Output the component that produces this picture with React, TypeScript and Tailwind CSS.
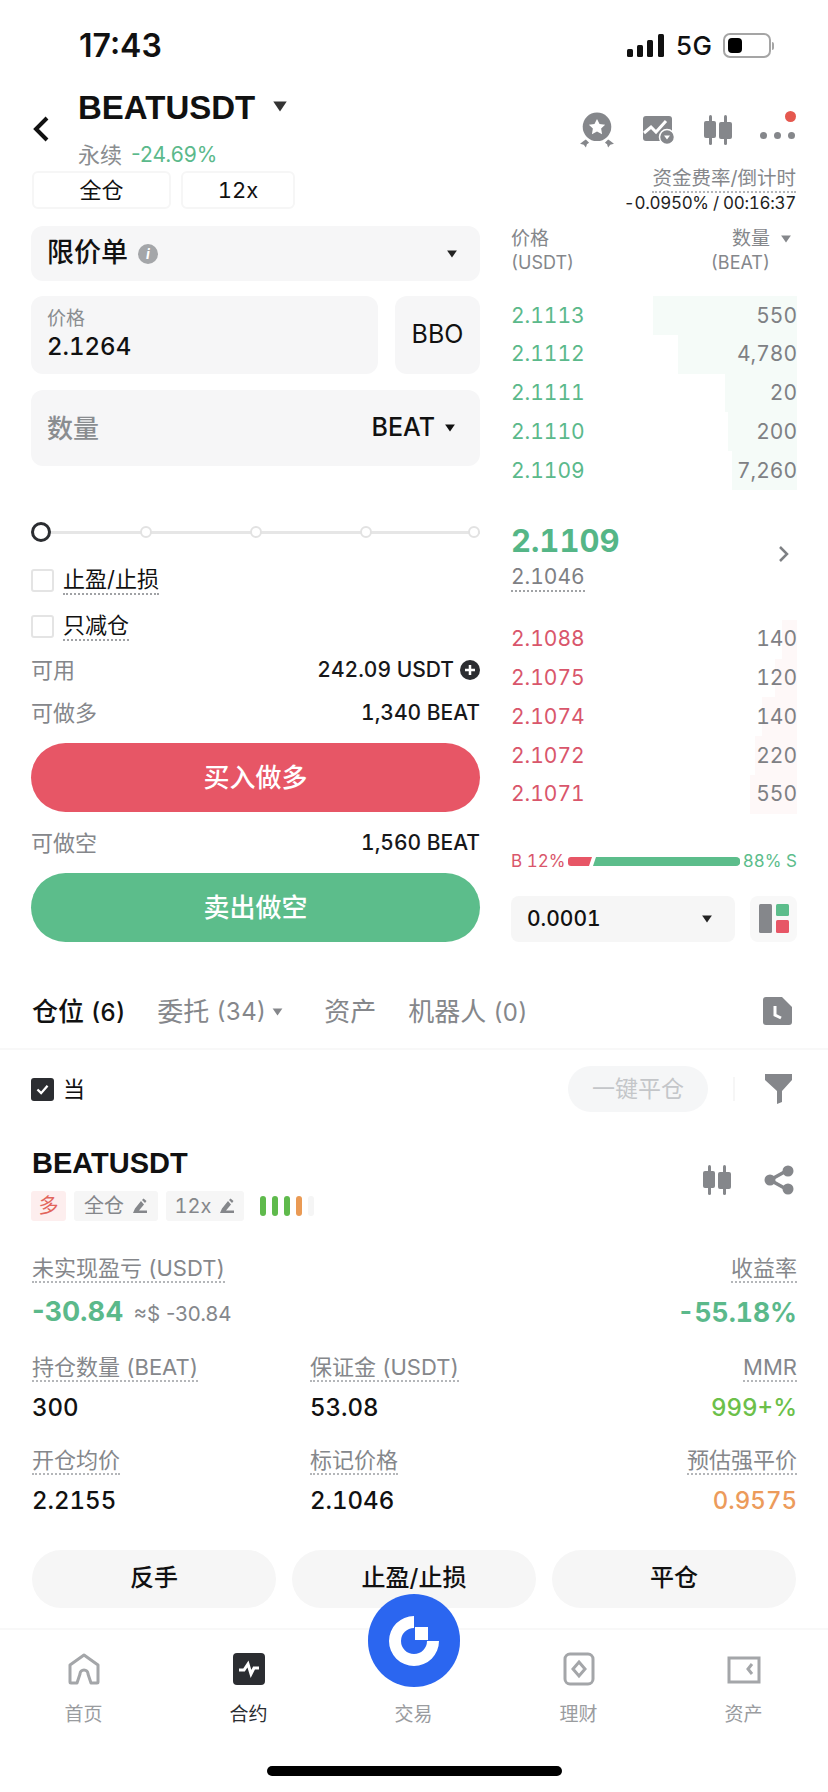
const green = "text-[#5bb98b]";

function Caret({ className = "" }: { className?: string }) {
  return (
    <svg viewBox="0 0 12 9" className={className} fill="currentColor">
      <path d="M0.5 0.5h11L6 8.5z" />
    </svg>
  );
}

function Candles({ className = "" }: { className?: string }) {
  return (
    <svg viewBox="0 0 30 30" className={className} fill="#85878b">
      <rect x="6" y="0" width="3" height="30" rx="1.5" />
      <rect x="1" y="6" width="12" height="17" rx="2" />
      <rect x="21" y="0" width="3" height="30" rx="1.5" />
      <rect x="16" y="7" width="13" height="17" rx="2" />
    </svg>
  );
}

function Medal() {
  return (
    <svg viewBox="0 0 34 34" className="h-[36px] w-[36px]">
      <circle cx="17" cy="14" r="13.5" fill="#85878b" />
      <path d="M17 6.5l2.4 4.8 5.3.7-3.8 3.7.9 5.2-4.8-2.4-4.8 2.4.9-5.2-3.8-3.700 5.3-.7z" fill="#fff" />
      <path d="M1 30l4-3 1.5-1 3 3-2 1.5-1 3-2-2.500zM33 30l-4-3-1.500-1-3 3 2 1.500 1 3 2-2.500z" fill="#85878b" />
    </svg>
  );
}

function ChartBadge() {
  return (
    <svg viewBox="0 0 34 30" className="h-[30px] w-[34px]">
      <rect x="1" y="1" width="29" height="25" rx="3" fill="#85878b" />
      <path d="M2 18l7-6 5 5 10-11" stroke="#fff" strokeWidth="3" fill="none" />
      <circle cx="25" cy="22" r="7.500" fill="#85878b" stroke="#fff" strokeWidth="1.500" />
      <path d="M22 20.500h6l-3 4z" fill="#fff" />
    </svg>
  );
}

function Share() {
  return (
    <svg viewBox="0 0 30 30" className="h-[30px] w-[30px]" fill="#85878b">
      <path d="M24 5L6 15l18 10" stroke="#85878b" strokeWidth="3.500" fill="none" />
      <circle cx="24" cy="6" r="5.500" />
      <circle cx="6" cy="15" r="5.500" />
      <circle cx="24" cy="24" r="5.500" />
    </svg>
  );
}

function Pencil() {
  return (
    <svg viewBox="0 0 16 16" className="h-4 w-4" fill="#85878b">
      <path d="M1 15h14v-2.500H7l5-6L9 3 3 10.500z" />
      <path d="M10 2l1.500-1.500 3 2.500L13 5z" />
    </svg>
  );
}

function Label({ children, className = "" }: { children: React.ReactNode; className?: string }) {
  return (
    <span className={`inline-block border-b-2 border-dotted border-[#b4b6b9] leading-[26px] text-[#85878b] ${className}`}>
      {children}
    </span>
  );
}

function BookRow({ price, qty, from, color, bar }: { price: string; qty: string; from: number; color: string; bar: string }) {
  return (
    <div className="relative flex h-[38.75px] items-center justify-between text-[21px]">
      <div className={`absolute inset-y-0 right-0 ${bar}`} style={{ left: from }} />
      <span className={`relative ${color}`}>{price}</span>
      <span className="relative text-[#7e8084]">{qty}</span>
    </div>
  );
}

function Pair({ label, value, plus }: { label: string; value: string; plus?: boolean }) {
  return (
    <div className="flex h-[30px] items-center justify-between">
      <span className="text-[22px] text-[#85878b]">{label}</span>
      <span className="flex items-center gap-[6px] text-[21px] font-medium text-[#17181a]">
        {value}
        {plus && (
          <svg viewBox="0 0 20 20" className="h-5 w-5">
            <circle cx="10" cy="10" r="10" fill="#2b2d31" />
            <path d="M5 10h10M10 5v10" stroke="#fff" strokeWidth="2.500" />
          </svg>
        )}
      </span>
    </div>
  );
}

function Stat({ label, value, valueClass = "text-[#111]", right }: { label: string; value: string; valueClass?: string; right?: boolean }) {
  return (
    <div className={`flex flex-col ${right ? "items-end" : "items-start"}`}>
      <Label className="text-[22px]">{label}</Label>
      <span className={`mt-[11px] text-[24px] leading-[30px] font-medium ${valueClass}`}>{value}</span>
    </div>
  );
}

function Action({ children }: { children: React.ReactNode }) {
  return (
    <div className="flex h-[58px] w-[244px] items-center justify-center rounded-full bg-[#f6f6f6] pb-[2px] text-[24px] font-medium text-[#111]">
      {children}
    </div>
  );
}

function NavItem({ label, active, children }: { label: string; active?: boolean; children?: React.ReactNode }) {
  return (
    <div className="flex w-[165px] flex-col items-center">
      <div className="flex h-[34px] items-center">{children}</div>
      <span className={`mt-[16px] text-[19px] leading-[26px] ${active ? "text-[#2b2d31]" : "text-[#9a9c9f]"}`}>{label}</span>
    </div>
  );
}

export default function App() {
  return (
    <div className="relative h-[1792px] w-[828px] overflow-hidden bg-white font-['Inter','Noto_Sans_CJK_SC',sans-serif] text-[#111] tabular-nums">
      {/* status bar */}
      <div className="flex h-[92px] items-center justify-between pr-[54px] pb-[1px] pl-[79px]">
        <span className="text-[32px] font-semibold normal-nums">17:43</span>
        <div className="flex items-center">
          <svg viewBox="0 0 38 24" className="h-6 w-[38px]" fill="#111">
            <rect x="0" y="15" width="6" height="8" rx="1.500" />
            <rect x="10" y="11" width="6" height="12" rx="1.500" />
            <rect x="20" y="6" width="6" height="17" rx="1.500" />
            <rect x="31" y="0" width="6" height="23" rx="1.500" />
          </svg>
          <span className="ml-[11px] text-[26px] leading-none font-medium">5G</span>
          <div className="ml-[11px] flex h-[25px] w-[48px] items-center rounded-[7px] border-2 border-[#a5a5a5] p-[3px]">
            <div className="h-full w-[14px] rounded-[4px] bg-black" />
          </div>
          <div className="ml-[1px] h-[8px] w-[2px] rounded-r bg-[#a5a5a5]" />
        </div>
      </div>

      {/* header */}
      <div className="flex h-[134px] justify-between pr-[32px] pl-[32px]">
        <div>
          <div className="flex">
            <svg viewBox="0 0 18 26" className="mt-[24px] h-[26px] w-[18px] flex-none" fill="none" stroke="#111" strokeWidth="4">
              <path d="M15 2L4 13l11 11" />
            </svg>
            <div className="ml-[28px]">
              <div className="flex h-[32px] items-center">
                <span className="font-['Liberation_Sans',sans-serif] text-[33px] font-bold">BEATUSDT</span>
                <Caret className="mt-[-4px] ml-[17px] h-[11px] w-[16px] text-[#333]" />
              </div>
              <div className="mt-[16px] flex h-[30px] items-center text-[22px] text-[#8a8d90]">
                永续
                <span className={`ml-[9px] text-[21px] normal-nums ${green}`}>-24.69%</span>
              </div>
            </div>
          </div>
          <div className="mt-[1px] flex gap-[10px] text-[22px]">
            <div className="flex h-[38px] w-[139px] items-center justify-center rounded-[6px] border-2 border-[#f6f6f6]">全仓</div>
            <div className="flex h-[38px] w-[114px] items-center justify-center rounded-[6px] border-2 border-[#f6f6f6]">12x</div>
          </div>
        </div>
        <div className="flex flex-col items-end">
          <div className="mt-[20px] flex h-[36px] items-center gap-[27px]">
            <Medal />
            <ChartBadge />
            <Candles className="h-[30px] w-[30px]" />
            <div className="relative flex h-[30px] w-[36px] items-end gap-[7px] pb-[6px]">
              <span className="h-[7px] w-[7px] rounded-full bg-[#85878b]" />
              <span className="h-[7px] w-[7px] rounded-full bg-[#85878b]" />
              <span className="h-[7px] w-[7px] rounded-full bg-[#85878b]" />
              <span className="absolute top-[-4px] right-0 h-[11px] w-[11px] rounded-full bg-[#e5584f]" />
            </div>
          </div>
          <Label className="mt-[17px] text-[19.5px]">资金费率/倒计时</Label>
          <span className="mt-[-2px] text-[17px] leading-[24px] tracking-[-0.3px] text-[#222]">-0.0950% / 00:16:37</span>
        </div>
      </div>

      {/* trade form + order book */}
      <div className="flex h-[745px] pl-[31px]">
        <div className="w-[449px]">
          <div className="flex h-[55px] items-center rounded-[12px] bg-[#f6f6f7] pr-[22px] pl-[16px]">
            <span className="text-[27px] font-medium">限价单</span>
            <span className="ml-[10px] flex h-5 w-5 items-center justify-center rounded-full bg-[#a4a6a9] text-[14px] font-bold text-white italic">i</span>
            <Caret className="ml-auto h-[8px] w-[12px] text-[#222]" />
          </div>
          <div className="mt-[15px] flex gap-[17px]">
            <div className="h-[78px] w-[347px] rounded-[12px] bg-[#f6f6f7] pt-[10px] pl-[16px]">
              <div className="text-[19px] leading-[26px] text-[#8a8d90]">价格</div>
              <div className="text-[24px] leading-[30px] font-medium">2.1264</div>
            </div>
            <div className="flex h-[78px] w-[85px] items-center justify-center rounded-[12px] bg-[#f6f6f7] text-[25px]">BBO</div>
          </div>
          <div className="mt-[16px] flex h-[76px] items-center justify-between rounded-[12px] bg-[#f6f6f7] pr-[24px] pl-[16px]">
            <span className="text-[26px] font-medium text-[#8a8d90]">数量</span>
            <span className="flex items-center gap-[9px] text-[25px] font-medium">
              BEAT
              <Caret className="h-[8px] w-[12px] text-[#111]" />
            </span>
          </div>

          <div className="relative mt-[56px] flex h-[20px] items-center">
            <div className="absolute inset-x-0 h-[3px] bg-[#e6e6e6]" />
            <span className="relative h-[20px] w-[20px] rounded-full border-[3px] border-[#2b2d31] bg-white" />
            <span className="relative ml-[89px] h-[12px] w-[12px] rounded-full border-2 border-[#e2e2e2] bg-white" />
            <span className="relative ml-[98px] h-[12px] w-[12px] rounded-full border-2 border-[#e2e2e2] bg-white" />
            <span className="relative ml-[98px] h-[12px] w-[12px] rounded-full border-2 border-[#e2e2e2] bg-white" />
            <span className="relative ml-auto h-[12px] w-[12px] rounded-full border-2 border-[#e2e2e2] bg-white" />
          </div>

          <div className="mt-[25px] flex h-[26px] items-center">
            <span className="h-[23px] w-[23px] rounded-[3px] border-2 border-[#e4e4e4]" />
            <span className="ml-[9px] inline-block border-b-2 border-dotted border-[#a0a2a5] text-[22px] leading-[28px]">止盈/止损</span>
          </div>
          <div className="mt-[20px] flex h-[26px] items-center">
            <span className="h-[23px] w-[23px] rounded-[3px] border-2 border-[#e4e4e4]" />
            <span className="ml-[9px] inline-block border-b-2 border-dotted border-[#a0a2a5] text-[22px] leading-[28px]">只减仓</span>
          </div>

          <div className="mt-[16px]">
            <Pair label="可用" value="242.09 USDT" plus />
          </div>
          <div className="mt-[13px]">
            <Pair label="可做多" value="1,340 BEAT" />
          </div>
          <div className="mt-[15px] flex h-[69px] items-center justify-center rounded-full bg-[#e75666] text-[26px] font-medium text-white">
            买入做多
          </div>
          <div className="mt-[16px]">
            <Pair label="可做空" value="1,560 BEAT" />
          </div>
          <div className="mt-[15px] flex h-[69px] items-center justify-center rounded-full bg-[#5cbd8b] text-[26px] font-medium text-white">
            卖出做空
          </div>
        </div>

        <div className="ml-[31px] w-[286px]">
          <div className="flex justify-between text-[#85878b]">
            <div className="pt-[1px] text-[19px] leading-[24px]">
              价格
              <div className="text-[18px]">(USDT)</div>
            </div>
            <div className="flex flex-col items-end pt-[1px] pr-[27px] text-[19px] leading-[24px]">
              <span className="relative">
                数量
                <Caret className="absolute top-[8px] right-[-22px] h-[8px] w-[12px] text-[#85878b]" />
              </span>
              <span className="text-[18px]">(BEAT)</span>
            </div>
          </div>
          <div className="mt-[21px]">
            <BookRow price="2.1113" qty="550" from={142} color={green} bar="bg-[#f5fbf8]" />
            <BookRow price="2.1112" qty="4,780" from={167} color={green} bar="bg-[#f5fbf8]" />
            <BookRow price="2.1111" qty="20" from={214} color={green} bar="bg-[#f5fbf8]" />
            <BookRow price="2.1110" qty="200" from={217} color={green} bar="bg-[#f5fbf8]" />
            <BookRow price="2.1109" qty="7,260" from={221} color={green} bar="bg-[#f5fbf8]" />
          </div>
          <div className="flex h-[130px] items-start justify-between pt-[31px]">
            <div>
              <div className="text-[31px] leading-[40px] font-bold text-[#55b687]">2.1109</div>
              <span className="mt-[3px] inline-block border-b-2 border-dotted border-[#a0a2a5] text-[21px] leading-[26px] text-[#7e8084]">2.1046</span>
            </div>
            <svg viewBox="0 0 12 18" className="mt-[24px] mr-[7px] h-[18px] w-[12px]" fill="none" stroke="#7e8084" strokeWidth="2.500">
              <path d="M2 2l7 7-7 7" />
            </svg>
          </div>
          <div>
            <BookRow price="2.1088" qty="140" from={271} color="text-[#d9566b]" bar="bg-[#fef8f8]" />
            <BookRow price="2.1075" qty="120" from={264} color="text-[#d9566b]" bar="bg-[#fef8f8]" />
            <BookRow price="2.1074" qty="140" from={251} color="text-[#d9566b]" bar="bg-[#fef8f8]" />
            <BookRow price="2.1072" qty="220" from={244} color="text-[#d9566b]" bar="bg-[#fef8f8]" />
            <BookRow price="2.1071" qty="550" from={239} color="text-[#d9566b]" bar="bg-[#fef8f8]" />
          </div>
          <div className="mt-[36px] flex h-[24px] items-center text-[17px] whitespace-nowrap">
            <span className="w-[57px] text-[#d9566b]">B 12%</span>
            <svg viewBox="0 0 24 9" className="h-[9px] w-[24px] flex-none">
              <path d="M3 0h21l-3 9H3a3 3 0 0 1-3-3V3a3 3 0 0 1 3-3z" fill="#e75666" />
            </svg>
            <svg viewBox="0 0 147 9" className="ml-[1px] h-[9px] w-[147px] flex-none">
              <path d="M3 0h140a4 4 0 0 1 0 9H0z" fill="#5cbd8b" />
            </svg>
            <span className="ml-auto text-[#5cbd8b]">88% S</span>
          </div>
          <div className="mt-[22px] flex gap-[15px]">
            <div className="flex h-[46px] w-[225px] items-center justify-between rounded-[8px] bg-[#f6f6f6] pr-[22px] pl-[16px] text-[21px] font-medium">
              0.0001
              <Caret className="h-[8px] w-[12px] text-[#222]" />
            </div>
            <div className="flex h-[46px] w-[47px] items-center justify-center rounded-[8px] bg-[#f8f8f8]">
              <svg viewBox="0 0 30 29" className="h-[29px] w-[30px]">
                <rect x="0" y="0" width="13" height="29" rx="1.500" fill="#85878b" />
                <rect x="17" y="0" width="13" height="12" rx="1.500" fill="#5cbd8b" />
                <rect x="17" y="16" width="13" height="13" rx="1.500" fill="#e75666" />
              </svg>
            </div>
          </div>
        </div>
      </div>

      {/* tabs */}
      <div className="mt-[24px] flex h-[55px] items-start border-b-2 border-[#f8f8f8] pr-[36px] pl-[32px] text-[26px] leading-[34px] text-[#85878b]">
        <span className="mr-[32px] font-medium text-[#111]">
          仓位 <span className="text-[24px]">(6)</span>
        </span>
        <span className="flex items-center">
          委托 <span className="ml-[7px] text-[24px]">(34)</span>
          <Caret className="ml-[6px] h-[8px] w-[11px] text-[#85878b]" />
        </span>
        <span className="ml-[41px]">资产</span>
        <span className="ml-[32px]">
          机器人 <span className="text-[24px]">(0)</span>
        </span>
        <svg viewBox="0 0 29 28" className="mt-[2px] ml-auto h-[28px] w-[29px]">
          <path d="M3 0h16l10 10v15a3 3 0 0 1-3 3H3a3 3 0 0 1-3-3V3a3 3 0 0 1 3-3z" fill="#85878b" />
          <path d="M12 9v9l6 3" stroke="#fff" strokeWidth="3" fill="none" />
        </svg>
      </div>

      {/* position filter row */}
      <div className="mt-[16px] flex h-[46px] items-center pr-[36px] pl-[31px]">
        <span className="flex h-[23px] w-[23px] items-center justify-center rounded-[3px] bg-[#2b2d31]">
          <svg viewBox="0 0 14 12" className="h-[11px] w-[13px]" fill="none" stroke="#fff" strokeWidth="2.500">
            <path d="M1.500 6l4 4 7-8" />
          </svg>
        </span>
        <span className="ml-[9px] text-[22px]">当</span>
        <div className="ml-auto flex h-[46px] w-[140px] items-center justify-center rounded-full bg-[#f5f6f7] text-[23px] text-[#c4c6c9]">一键平仓</div>
        <div className="ml-[25px] h-[24px] w-[2px] bg-[#f6f6f6]" />
        <svg viewBox="0 0 27 30" className="ml-[30px] h-[30px] w-[27px]" fill="#85878b">
          <path d="M0 0h27v6l-10 11v11l-5 2V17L0 6z" />
        </svg>
      </div>

      {/* position card */}
      <div className="mt-[35px] flex items-start justify-between pr-[34px] pl-[32px]">
        <div>
          <div className="font-['Liberation_Sans',sans-serif] text-[29px] leading-[32px] font-bold">BEATUSDT</div>
          <div className="mt-[12px] ml-[-1px] flex h-[30px] items-center gap-[8px] text-[20px] text-[#85878b]">
            <span className="flex h-[30px] w-[35px] items-center justify-center rounded-[3px] bg-[#fdeeee] text-[#e2655c]">多</span>
            <span className="flex h-[30px] w-[84px] items-center justify-center gap-[8px] rounded-[3px] bg-[#f6f6f6]">全仓<Pencil /></span>
            <span className="flex h-[30px] w-[78px] items-center justify-center gap-[8px] rounded-[3px] bg-[#f6f6f6]">12x<Pencil /></span>
            <span className="ml-[8px] flex gap-[6px]">
              <span className="h-[20px] w-[6px] rounded-full bg-[#5fba4c]" />
              <span className="h-[20px] w-[6px] rounded-full bg-[#5fba4c]" />
              <span className="h-[20px] w-[6px] rounded-full bg-[#5fba4c]" />
              <span className="h-[20px] w-[6px] rounded-full bg-[#ea9a54]" />
              <span className="h-[20px] w-[6px] rounded-full bg-[#f5f5f5]" />
            </span>
          </div>
        </div>
        <div className="mt-[18px] flex items-center gap-[32px]">
          <Candles className="h-[30px] w-[30px]" />
          <Share />
        </div>
      </div>

      <div className="mt-[34px] flex justify-between pr-[31px] pl-[32px]">
        <div>
          <Label className="text-[22px]">未实现盈亏 (USDT)</Label>
          <div className="mt-[12px] flex items-baseline gap-[10px]">
            <span className={`text-[27px] leading-[34px] font-bold normal-nums ${green}`}>-30.84</span>
            <span className="text-[20.5px] text-[#85878b] normal-nums">≈$ -30.84</span>
          </div>
        </div>
        <div className="flex flex-col items-end">
          <Label className="text-[22px]">收益率</Label>
          <span className={`mt-[12px] text-[26.5px] leading-[34px] font-bold ${green}`}>-55.18%</span>
        </div>
      </div>

      <div className="mt-[24px] grid grid-cols-[278px_1fr_auto] pr-[31px] pl-[32px]">
        <Stat label="持仓数量 (BEAT)" value="300" />
        <Stat label="保证金 (USDT)" value="53.08" />
        <Stat label="MMR" value="999+%" valueClass="text-[#6cc04a]" right />
      </div>
      <div className="mt-[24px] grid grid-cols-[278px_1fr_auto] pr-[31px] pl-[32px]">
        <Stat label="开仓均价" value="2.2155" />
        <Stat label="标记价格" value="2.1046" />
        <Stat label="预估强平价" value="0.9575" valueClass="text-[#ec9b5b]" right />
      </div>

      <div className="mt-[34px] flex justify-between pr-[32px] pl-[32px]">
        <Action>反手</Action>
        <Action>止盈/止损</Action>
        <Action>平仓</Action>
      </div>

      {/* bottom nav */}
      <div className="mt-[20px] flex h-[166px] border-t-2 border-[#f8f8f8] pt-[22px] pl-[1px]">
        <NavItem label="首页">
          <svg viewBox="0 0 32 32" className="h-[34px] w-[32px]" fill="none" stroke="#a4a6a9" strokeWidth="3" strokeLinejoin="round">
            <path d="M2 12L16 2l14 10v17a1 1 0 0 1-1 1h-6l-3-9a4 4 0 0 0-8 0l-3 9H3a1 1 0 0 1-1-1z" />
          </svg>
        </NavItem>
        <NavItem label="合约" active>
          <svg viewBox="0 0 32 32" className="h-[34px] w-[32px]">
            <rect width="32" height="32" rx="4" fill="#2b2d31" />
            <path d="M6 17h5l4-6 3 10 3-6h5" stroke="#fff" strokeWidth="3" fill="none" />
          </svg>
        </NavItem>
        <NavItem label="交易" />
        <NavItem label="理财">
          <svg viewBox="0 0 32 34" className="h-[34px] w-[32px]" fill="none" stroke="#a4a6a9" strokeWidth="3">
            <rect x="2" y="2" width="28" height="30" rx="5" />
            <path d="M16 10l6 7-6 7-6-7z" />
          </svg>
        </NavItem>
        <NavItem label="资产">
          <svg viewBox="0 0 34 30" className="h-[30px] w-[34px]" fill="none" stroke="#a4a6a9" strokeWidth="3">
            <path d="M2 4h30v24H2z" />
            <path d="M25 10l-4 5 4 5" />
          </svg>
        </NavItem>
      </div>

      <div className="absolute top-[1594px] left-[368px] h-[93px] w-[92px] rounded-full bg-[#2b66f0]">
        <svg viewBox="0 0 92 93" className="h-[93px] w-[92px]">
          <path d="M46 22A25 25 0 1 0 71 47H59A13 13 0 1 1 46 34Z" fill="#fff" />
          <rect x="47" y="33" width="13" height="13" fill="#fff" />
        </svg>
      </div>
      <div className="absolute top-[1766px] left-[267px] h-[10px] w-[295px] rounded-full bg-black" />
    </div>
  );
}
